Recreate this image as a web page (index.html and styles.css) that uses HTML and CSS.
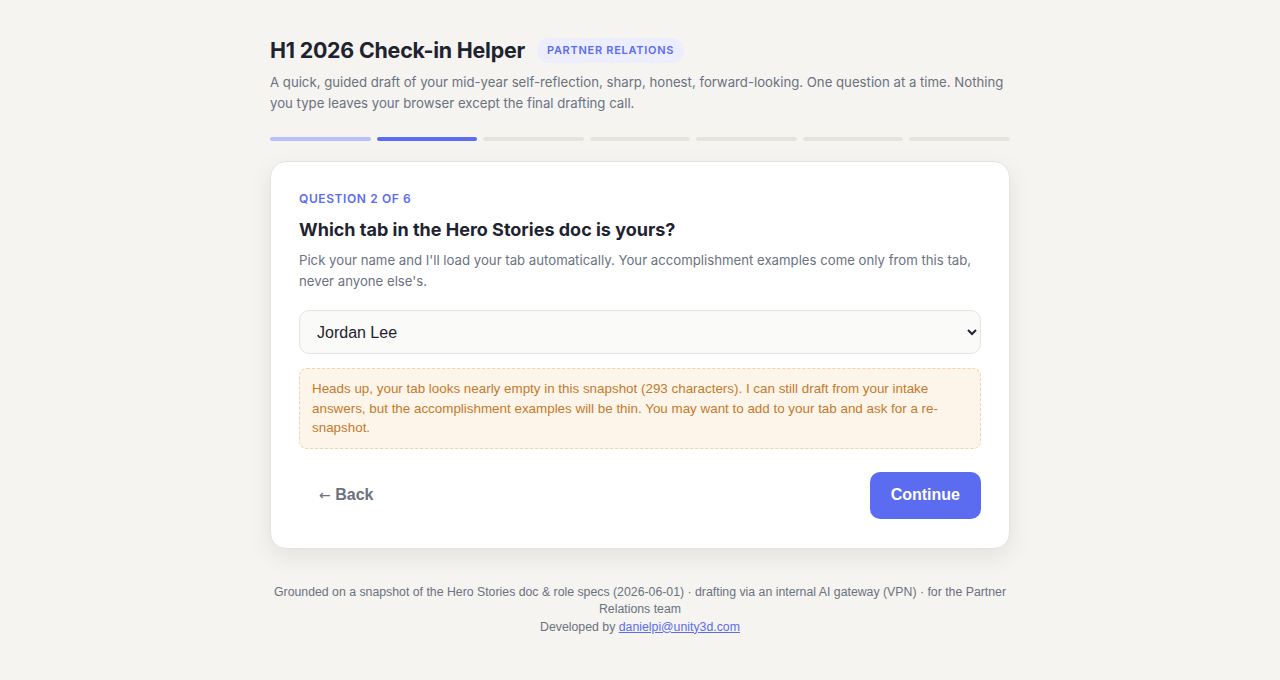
FILE: index.html
```html
<!doctype html>
<html lang="en">

<head>
	<meta charset="utf-8">
	<title>H1 2026 Check-in Helper</title>
	<meta name="viewport" content="width=device-width, initial-scale=1"/>
	<link rel="stylesheet" href="styles.css">
</head>

<body>
	<main class="wrap">
		<header class="head">
			<div class="title-row">
				<h1>H1 2026 Check-in Helper</h1>
				<span class="badge">Partner Relations</span>
			</div>
			<p class="lede">A quick, guided draft of your mid-year self-reflection, sharp, honest, forward-looking. One question at a time. Nothing you type leaves your browser except the final drafting call.</p>
		</header>

		<div class="steps">
			<span class="step done"></span>
			<span class="step current"></span>
			<span class="step"></span>
			<span class="step"></span>
			<span class="step"></span>
			<span class="step"></span>
			<span class="step"></span>
		</div>

		<section class="card">
			<div class="kicker">Question 2 of 6</div>
			<h2>Which tab in the Hero Stories doc is yours?</h2>
			<p class="hint">Pick your name and I'll load your tab automatically. Your accomplishment examples come only from this tab, never anyone else's.</p>

			<select id="tabSelect" aria-label="Your tab">
				<option>Jordan Lee</option>
			</select>

			<div class="warn">Heads up, your tab looks nearly empty in this snapshot (293 characters). I can still draft from your intake answers, but the accomplishment examples will be thin. You may want to add to your tab and ask for a re-snapshot.</div>

			<div class="actions">
				<button class="back" type="button"><span class="arrow">&larr;</span> Back</button>
				<button class="next" type="button">Continue</button>
			</div>
		</section>

		<footer class="foot">
			<p>Grounded on a snapshot of the Hero Stories doc &amp; role specs (2026-06-01) · drafting via an internal AI gateway (VPN) · for the Partner Relations team</p>
			<p>Developed by <a href="mailto:danielpi@unity3d.com">danielpi@unity3d.com</a></p>
		</footer>
	</main>
</body></html>
```

FILE: styles.css
```css
body {
	margin: 0;
	background-color: #f5f4f0;
	font-family: Inter, "Noto Sans", sans-serif;
	color: #1f2330;
}

.wrap {
	width: 740px;
	margin: 0 auto;
	padding-top: 37px;
}

.title-row {
	display: flex;
	align-items: center;
	gap: 12px;
}

h1 {
	margin: 0;
	font-size: 21.4px;
	font-weight: 700;
	letter-spacing: -0.01em;
	color: #1f2330;
}

.badge {
	background-color: #eceefd;
	color: #5b6cf0;
	font-size: 11px;
	font-weight: 600;
	letter-spacing: 0.065em;
	text-transform: uppercase;
	padding: 5px 10px 6px;
	border-radius: 12px;
}

.lede {
	margin: 9px 0 0;
	font-size: 13.2px;
	line-height: 21px;
	color: #6b7280;
}

.steps {
	display: flex;
	gap: 6px;
	margin-top: 23px;
}

.step {
	flex: 1;
	height: 4px;
	border-radius: 2px;
	background-color: #e6e3dc;
}
.step.done { background-color: #b9bff8; }
.step.current { background-color: #5b6cf0; }

.card {
	margin-top: 20px;
	background-color: #fff;
	border: 1px solid #e6e3dc;
	border-radius: 16px;
	box-shadow: 0 8px 24px rgba(30, 30, 20, .08);
	padding: 29px 28px 29px;
}

.kicker {
	font-size: 12px;
	font-weight: 600;
	letter-spacing: 0.05em;
	text-transform: uppercase;
	color: #5b6cf0;
}

h2 {
	margin: 13px 0 0;
	font-size: 18px;
	font-weight: 700;
	color: #1f2330;
}

.hint {
	margin: 10px 0 0;
	font-size: 13.2px;
	line-height: 21px;
	color: #6b7280;
}

select {
	display: block;
	width: 100%;
	height: 44px;
	margin-top: 18px;
	padding: 0 12px 0 13px;
	border: 1px solid #e6e3dc;
	border-radius: 10px;
	background-color: #fafaf8;
	font-family: "Liberation Sans", Arial, sans-serif;
	font-size: 16px;
	color: #1f2330;
}

.warn {
	margin-top: 14px;
	padding: 10px 12px;
	border: 1px dashed #f3d3a6;
	border-radius: 8px;
	background-color: #fef5ea;
	font-family: "Liberation Sans", Arial, sans-serif;
	font-size: 13.4px;
	line-height: 19.5px;
	color: #c27a2c;
}

.actions {
	display: flex;
	justify-content: space-between;
	align-items: center;
	margin-top: 23px;
}

button {
	border: 0;
	font-family: "Liberation Sans", Arial, sans-serif;
	font-size: 16px;
	font-weight: 600;
	cursor: pointer;
}

.back {
	background: none;
	color: #6b7280;
	padding: 0 20px;
	height: 47px;
}

.arrow {
	font-family: "DejaVu Sans", sans-serif;
	font-weight: 400;
	font-size: 14px;
}

.next {
	background-color: #5b6cf0;
	color: #fff;
	height: 47px;
	padding: 0 21px;
	border-radius: 10px;
}

.foot {
	margin-top: 35px;
	text-align: center;
	font-family: "Liberation Sans", Arial, sans-serif;
	font-size: 12.3px;
	line-height: 17.5px;
	color: #6b7280;
}

.foot p {
	margin: 0;
}

.foot a {
	color: #5b6cf0;
}
```
